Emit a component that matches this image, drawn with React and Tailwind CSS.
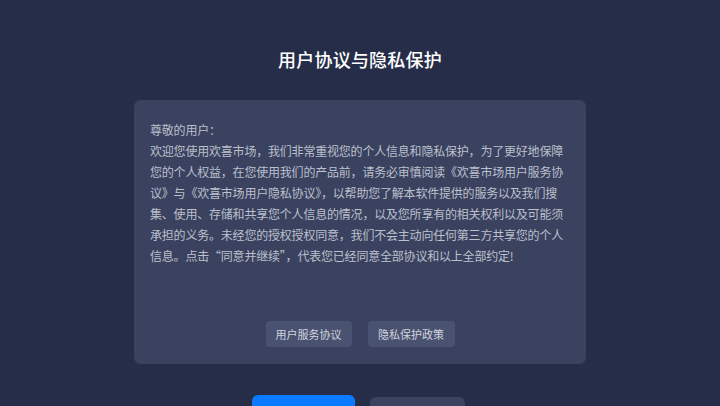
import React from 'react';

const lines = [
  '尊敬的用户：',
  '欢迎您使用欢喜市场，我们非常重视您的个人信息和隐私保护，为了更好地保障',
  '您的个人权益，在您使用我们的产品前，请务必审慎阅读《欢喜市场用户服务协',
  '议》与《欢喜市场用户隐私协议》，以帮助您了解本软件提供的服务以及我们搜',
  '集、使用、存储和共享您个人信息的情况，以及您所享有的相关权利以及可能须',
  '承担的义务。未经您的授权授权同意，我们不会主动向任何第三方共享您的个人',
  '信息。点击“同意并继续”，代表您已经同意全部协议和以上全部约定!',
];

function App() {
  return (
    <div
      className="w-[720px] h-[406px] overflow-hidden bg-[#262d48] flex flex-col items-center"
      style={{ fontFamily: '"Noto Sans CJK SC", "Noto Sans", sans-serif' }}
    >
      {/* Title */}
      <h1 className="shrink-0 mt-[48px] text-[18px] leading-[22px] font-medium text-white tracking-[0.2px]">
        用户协议与隐私保护
      </h1>

      {/* Agreement card */}
      <div className="shrink-0 mt-[30px] w-[452px] h-[264px] bg-[#3a4260] rounded-[7px] flex flex-col pl-4 pr-[12px] pt-[19px] pb-[17px]">
        <div className="flex-1 text-[12px] leading-[21px] tracking-[-0.2px] text-[#bcc0cc]">
          {lines.map((line, i) => (
            <p key={i} className="whitespace-nowrap">{line}</p>
          ))}
        </div>
        <div className="flex justify-center gap-4 pr-1">
          <button className="w-[86px] h-[26px] rounded-[4px] bg-[#4a5272] text-[11px] text-[#d2d5de]">
            用户服务协议
          </button>
          <button className="w-[87px] h-[26px] rounded-[4px] bg-[#4a5272] text-[11px] text-[#d2d5de]">
            隐私保护政策
          </button>
        </div>
      </div>

      {/* Bottom actions (labels fall below the visible area) */}
      <div className="shrink-0 mt-[31px] flex items-start gap-[15px] pr-[3px]">
        <button aria-label="同意并继续" className="w-[103px] h-[40px] rounded-[6px] bg-[#0a7bff]" />
        <button aria-label="不同意" className="mt-[2px] w-[95px] h-[36px] rounded-[6px] bg-[#3a4260]" />
      </div>
    </div>
  );
}

export default App;
